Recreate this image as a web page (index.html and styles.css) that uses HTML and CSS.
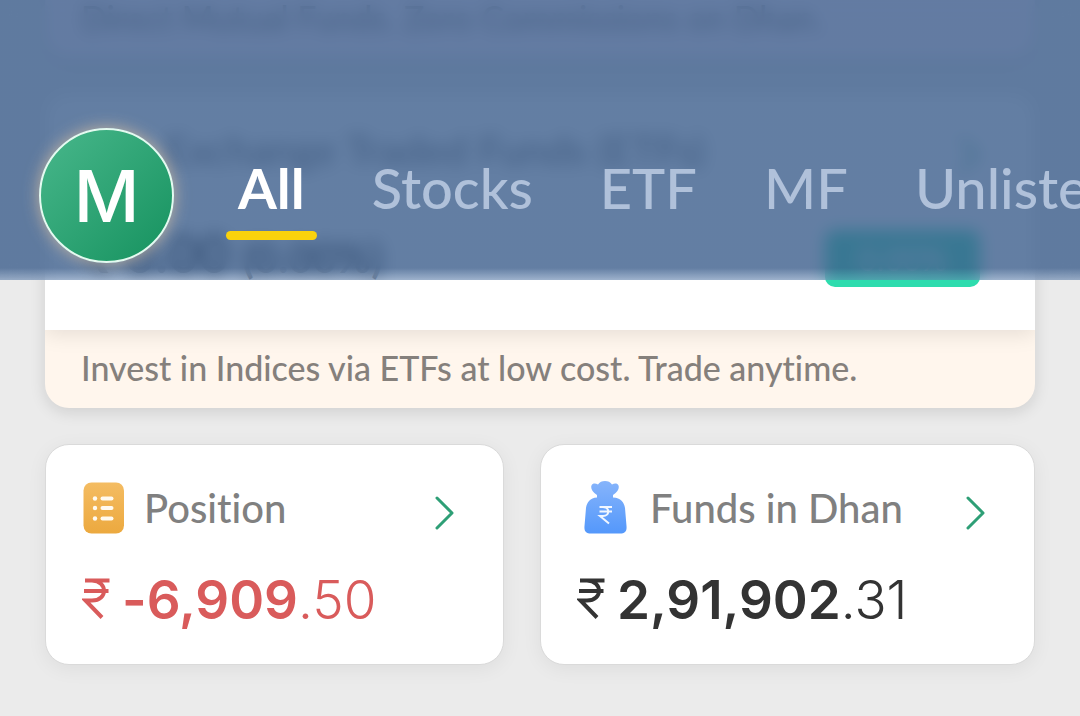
FILE: index.html
```html
<!DOCTYPE html>
<html lang="en">
<head>
<meta charset="utf-8">
<meta name="viewport" content="width=device-width, initial-scale=1">
<title>Portfolio</title>
<link rel="stylesheet" href="styles.css">
</head>
<body>
<header class="topbar">
  <button class="avatar" type="button" aria-label="Profile">M</button>
  <nav class="tabs">
    <a class="tab tab-active" href="#all">All</a>
    <a class="tab" href="#stocks">Stocks</a>
    <a class="tab" href="#etf">ETF</a>
    <a class="tab" href="#mf">MF</a>
    <a class="tab" href="#unlisted">Unlisted</a>
  </nav>
</header>
<main class="feed">
  <section class="promo promo-funds">
    <p class="promo-note">Direct Mutual Funds. Zero Commissions on Dhan.</p>
  </section>
  <section class="promo">
    <div class="promo-body">
      <div class="promo-head">
        <h2 class="promo-title">Exchange Traded Funds (ETFs)</h2>
        <svg class="chevron" viewBox="0 0 20 34" aria-hidden="true"><path d="M2 2 17 17 2 32"/></svg>
      </div>
      <div class="promo-row">
        <p class="promo-value">₹ 0.00 <span class="promo-change">(0.00%)</span></p>
        <button class="invest" type="button">0.00%</button>
      </div>
    </div>
    <p class="promo-note">Invest in Indices via ETFs at low cost. Trade anytime.</p>
  </section>
  <div class="cards">
    <section class="card">
      <div class="card-head">
        <svg class="card-icon" viewBox="0 0 42 54" aria-hidden="true">
          <defs><linearGradient id="amber" x1="0" y1="0" x2="0" y2="1"><stop offset="0" stop-color="#f4bc62"/><stop offset="1" stop-color="#eca93f"/></linearGradient></defs>
          <rect x="1.500" y="1.500" width="40.500" height="51" rx="8" fill="url(#amber)"/>
          <g fill="#fffaf0"><circle cx="13" cy="17.500" r="2.200"/><circle cx="13" cy="27" r="2.200"/><circle cx="13" cy="37.500" r="2.200"/>
          <rect x="18.500" y="15.500" width="13" height="4" rx="2"/><rect x="18.500" y="25" width="13" height="4" rx="2"/><rect x="18.500" y="35.500" width="13" height="4" rx="2"/></g>
        </svg>
        <h2 class="card-title">Position</h2>
        <svg class="chevron" viewBox="0 0 20 34" aria-hidden="true"><path d="M2 2 17 17 2 32"/></svg>
      </div>
      <p class="amount amount-loss"><svg class="rupee" viewBox="0 0 28 44" aria-hidden="true"><path d="M3 2.500H27.500M2 13H26.500M3 2.500H10C26 3 26 22.500 10 22.500H3.500L20 39.500"/></svg><span class="amount-main">-6,909</span><span class="amount-cents">.50</span></p>
    </section>
    <section class="card">
      <div class="card-head">
        <svg class="card-icon card-icon-wide" viewBox="-7 0 53 54" aria-hidden="true">
          <defs><linearGradient id="azure" x1="0" y1="0" x2="0" y2="1"><stop offset="0" stop-color="#86b4fb"/><stop offset="1" stop-color="#5498fb"/></linearGradient></defs>
          <path fill="url(#azure)" d="M13 14C8 11 6.500 7 7.500 4.500 8.500 2 11.500 2 14 3.500 15.500 1 18 0 21 0s5.500 1 7 3.500c2.500-1.500 5.500-1.500 6.500 1 1 2.500-.5 6.500-5.500 9.500v2.500c8 .5 11 4.500 12 10.500l1.500 18c.5 5-1.500 7.500-6.500 7.500H7c-5 0-7-2.500-6.500-7.500L2 27c1-6 4-10 11-10.500z"/>
          <path fill="none" stroke="#f1f7ff" stroke-width="2" d="M15.500 26H28M15.500 30.500H28M16 26h3c7 0 7 9 0 9h-3l9 7.500"/>
        </svg>
        <h2 class="card-title">Funds in Dhan</h2>
        <svg class="chevron" viewBox="0 0 20 34" aria-hidden="true"><path d="M2 2 17 17 2 32"/></svg>
      </div>
      <p class="amount"><svg class="rupee" viewBox="0 0 28 44" aria-hidden="true"><path d="M3 2.500H27.500M2 13H26.500M3 2.500H10C26 3 26 22.500 10 22.500H3.500L20 39.500"/></svg><span class="amount-main">2,91,902</span><span class="amount-cents">.31</span></p>
    </section>
  </div>
</main>
</body>
</html>
```
FILE: styles.css
```css
* { box-sizing: border-box; }
body {
  margin: 0;
  background: #ebebeb;
  color: #333;
  font-family: Lato, "Liberation Sans", sans-serif;
  font-variant-ligatures: none;
}
h2, p { margin: 0; font-weight: 400; }
button { border: 0; padding: 0; font: inherit; }

.topbar {
  position: fixed;
  inset: 0 0 auto;
  z-index: 2;
  display: flex;
  align-items: center;
  gap: 52px;
  padding: 128px 0 17px 39px;
  overflow: hidden;
  background: linear-gradient(to top, rgba(92, 126, 170, 0.6), rgba(60, 94, 140, 0.8) 12px);
  backdrop-filter: blur(8px);
}
.avatar {
  flex: none;
  width: 135px;
  height: 135px;
  border: 2px solid #e4faf0;
  border-radius: 50%;
  background: linear-gradient(135deg, #48b78b, #16925f);
  box-shadow: 0 0 16px rgba(255, 214, 160, 0.6);
  color: #fff;
  font-family: Inter, "Liberation Sans", sans-serif;
  font-size: 72px;
  font-weight: 500;
}
.tabs { display: flex; gap: 43px; }
.tab {
  display: flex;
  flex-direction: column;
  align-items: center;
  gap: 6px;
  padding: 0 12px;
  color: #b0c1da;
  font-size: 56px;
  font-weight: 500;
  line-height: 74px;
  text-decoration: none;
}
.tab-active { color: #fff; font-weight: 700; }
.tab-active::after {
  content: "";
  align-self: stretch;
  height: 9px;
  margin: 0 -12px;
  border-radius: 5px;
  background: #fad20c;
}

.feed {
  display: flex;
  flex-direction: column;
  gap: 36px;
  padding: 0 45px 50px;
}
.promo {
  overflow: clip;
  border-radius: 24px;
  background: #fff6ed;
  box-shadow: 0 4px 16px rgba(0, 0, 0, 0.12);
}
.promo-funds { margin-top: -20px; background: #fff0fb; }
.promo-body {
  padding: 32px 55px 43px 36px;
  background: #fff;
  box-shadow: 0 4px 20px rgba(0, 0, 0, 0.1);
}
.promo-note {
  padding: 14px 36px 16px;
  color: #85807c;
  font-size: 34px;
  font-weight: 500;
  line-height: 48px;
}
.promo-head, .promo-row, .card-head { display: flex; align-items: center; }
.promo-title { flex: 1; padding-left: 84px; color: #606060; font-size: 41px; line-height: 48px; }
.promo-row { justify-content: space-between; margin-top: 56px; }
.promo-value { padding-bottom: 8px; font-size: 53px; font-weight: 700; line-height: 40px; }
.promo-change { font-size: 42px; }
.invest {
  width: 155px;
  height: 57px;
  border-radius: 10px;
  background: #2edcae;
  color: #fff;
  font-size: 32px;
}
.cards { display: grid; grid-template-columns: 458fr 494fr; gap: 36px; }
.card {
  padding: 35px 48px 32px 36px;
  border: 1px solid #dadada;
  border-radius: 24px;
  background: #fff;
  box-shadow: 0 4px 20px rgba(0, 0, 0, 0.06);
}
.card-head { gap: 20px; }
.card-icon { flex: none; width: 42px; height: 54px; }
.card-icon-wide { width: 53px; }
.card-title { flex: 1; color: #808080; font-size: 40px; font-weight: 500; line-height: 56px; }
.chevron {
  flex: none;
  width: 20px;
  height: 44px;
  padding-top: 10px;
  fill: none;
  stroke: #2e9f76;
  stroke-width: 3;
  stroke-linecap: round;
  stroke-linejoin: round;
}
.amount {
  display: flex;
  align-items: center;
  margin-top: 32px;
  font-family: Inter, "Liberation Sans", sans-serif;
  font-size: 53px;
  line-height: 64px;
}
.amount-loss { color: #d95b5b; }
.amount-main { font-weight: 600; }
.amount-cents { font-weight: 300; }
.rupee { flex: none; width: 28px; height: 44px; margin-right: 12px; fill: none; stroke: currentColor; stroke-width: 4; }
```
